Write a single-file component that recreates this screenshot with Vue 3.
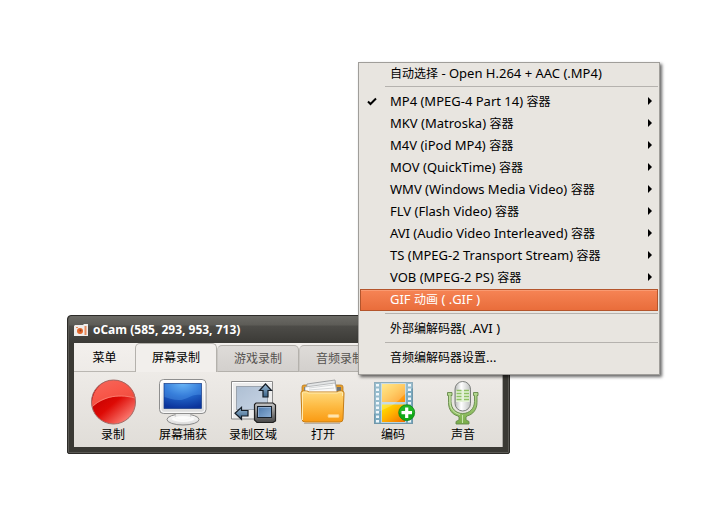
<script setup>
import { ref } from 'vue';

const tabs = ['菜单', '屏幕录制', '游戏录制', '音频录制'];
const activeTab = ref('屏幕录制');

const tools = [
  { id: 'record', label: '录制' },
  { id: 'capture', label: '屏幕捕获' },
  { id: 'region', label: '录制区域' },
  { id: 'open', label: '打开' },
  { id: 'codec', label: '编码' },
  { id: 'sound', label: '声音' },
];

const groups = [
  [{ label: '自动选择 - Open H.264 + AAC (.MP4)' }],
  [
    { label: 'MP4 (MPEG-4 Part 14) 容器', sub: true, checked: true },
    { label: 'MKV (Matroska) 容器', sub: true },
    { label: 'M4V (iPod MP4) 容器', sub: true },
    { label: 'MOV (QuickTime) 容器', sub: true },
    { label: 'WMV (Windows Media Video) 容器', sub: true },
    { label: 'FLV (Flash Video) 容器', sub: true },
    { label: 'AVI (Audio Video Interleaved) 容器', sub: true },
    { label: 'TS (MPEG-2 Transport Stream) 容器', sub: true },
    { label: 'VOB (MPEG-2 PS) 容器', sub: true },
    { label: 'GIF 动画 ( .GIF )', selected: true },
  ],
  [{ label: '外部编解码器( .AVI )' }],
  [{ label: '音频编解码器设置...' }],
];

// Latin and Chinese runs are set at different sizes
function runs(label) {
  return label.match(/[\u4e00-\u9fff]+|[^\u4e00-\u9fff]+/g).map((text) => ({
    text,
    han: /[\u4e00-\u9fff]/.test(text),
  }));
}
</script>

<template>
  <main class="desktop">
    <section class="window">
      <header class="titlebar">
        <svg class="app-icon" viewBox="0 0 14 14" aria-hidden="true">
          <path d="M0 3l1-1h8l1-1h4v12H0z" fill="#efedeb" />
          <circle cx="6" cy="8" r="3" fill="#e2672c" />
          <circle cx="6.500" cy="7.500" r="1" fill="#8d3c1c" />
          <path d="M10.500 3h2v9h-2z" fill="#e98b5c" />
          <path d="M2 4h2v1H2z" fill="#e98b5c" />
        </svg>
        <h1 class="title">oCam (585, 293, 953, 713)</h1>
      </header>

      <div class="client">
        <nav class="tabs">
          <button
            v-for="(tab, i) in tabs"
            :key="tab"
            type="button"
            class="tab"
            :class="{ plain: i === 0, active: tab === activeTab }"
            @click="activeTab = tab"
          >{{ tab }}</button>
        </nav>

        <div class="toolbar">
          <button v-for="tool in tools" :key="tool.id" type="button" class="tool">
            <svg v-if="tool.id === 'record'" class="tool-icon" viewBox="0 0 48 48" aria-hidden="true">
              <defs>
                <linearGradient id="recBase" x1="0.2" y1="0.3" x2="0.8" y2="1">
                  <stop offset="0" stop-color="#c40000" />
                  <stop offset="0.4" stop-color="#dd0a05" />
                  <stop offset="1" stop-color="#ff8a80" />
                </linearGradient>
                <linearGradient id="recShine" x1="0" y1="0" x2="0.6" y2="1">
                  <stop offset="0" stop-color="#f4685c" />
                  <stop offset="0.5" stop-color="#f8584a" />
                  <stop offset="1" stop-color="#ee4a3c" />
                </linearGradient>
              </defs>
              <circle cx="24.5" cy="24" r="22" fill="url(#recBase)" />
              <path d="M3 29C2 14 12 2 24.500 2 36 2 45 10 46.500 20 27 15 12 21 3 29z" fill="url(#recShine)" />
              <path d="M3 29C12 20 27 15 46 20" fill="none" stroke="#ff9a8c" stroke-width="0.6" />
              <circle cx="24.5" cy="24" r="22" fill="none" stroke="#a16b66" />
            </svg>

            <svg v-else-if="tool.id === 'capture'" class="tool-icon" viewBox="0 0 48 48" aria-hidden="true">
              <defs>
                <radialGradient id="capScreen" cx="0.5" cy="0" r="1">
                  <stop offset="0" stop-color="#66b4f4" />
                  <stop offset="0.5" stop-color="#2368cc" />
                  <stop offset="1" stop-color="#0b349c" />
                </radialGradient>
                <linearGradient id="capBody" x1="0" y1="0" x2="0" y2="1">
                  <stop offset="0" stop-color="#fff" />
                  <stop offset="1" stop-color="#d9d9d9" />
                </linearGradient>
              </defs>
              <ellipse cx="24" cy="41.500" rx="16" ry="5.500" fill="url(#capBody)" stroke="#888" />
              <path d="M17 34h14l1 6c-4 3-12 3-16 0z" fill="#e8e8e8" stroke="#bbb" stroke-width="0.6" />
              <ellipse cx="24" cy="41" rx="11" ry="3" fill="#fff" opacity="0.8" />
              <rect x="0.500" y="1.500" width="46.500" height="34" rx="4" fill="url(#capBody)" stroke="#8e8e8e" />
              <rect x="1.800" y="2.800" width="44" height="31.500" rx="3" fill="none" stroke="#fff" />
              <rect x="5" y="5.500" width="37.500" height="25" fill="url(#capScreen)" stroke="#173d86" stroke-width="0.7" />
              <path d="M5.500 6H42v11c-9-2-14 5-22 5-6 0-10-2-14.500-3z" fill="#6db6ff" opacity="0.28" />
            </svg>

            <svg v-else-if="tool.id === 'region'" class="tool-icon" viewBox="0 0 48 48" aria-hidden="true">
              <defs>
                <linearGradient id="regScreen" x1="0" y1="0" x2="1" y2="1">
                  <stop offset="0" stop-color="#aebfd3" />
                  <stop offset="1" stop-color="#c7d4e4" />
                </linearGradient>
                <linearGradient id="regArrow" x1="0" y1="0" x2="0" y2="1">
                  <stop offset="0" stop-color="#9bbbd6" />
                  <stop offset="1" stop-color="#386186" />
                </linearGradient>
                <linearGradient id="regDark" x1="0" y1="0" x2="0" y2="1">
                  <stop offset="0" stop-color="#c8c8c8" />
                  <stop offset="0.5" stop-color="#868686" />
                  <stop offset="1" stop-color="#444" />
                </linearGradient>
                <linearGradient id="regMini" x1="0" y1="0" x2="1" y2="1">
                  <stop offset="0" stop-color="#4b77a9" />
                  <stop offset="1" stop-color="#8eb1d7" />
                </linearGradient>
              </defs>
              <path d="M2.500 3.500h41v33l-4 4.500h-37z" fill="#ececec" stroke="#8a8a8a" />
              <path d="M3.500 40V4.500H43" fill="none" stroke="#fff" />
              <rect x="7.500" y="8.500" width="31" height="23" fill="url(#regScreen)" stroke="#9aa3ae" />
              <path d="M36.500 6l6 6.500h-3.500V19h-5v-6.500h-3.500z" fill="url(#regArrow)" stroke="#151d26" stroke-width="1.200" />
              <path d="M6 35.300l6.500-6v3.200H19v5.500h-6.500v3.300z" fill="url(#regArrow)" stroke="#151d26" stroke-width="1.200" />
              <path d="M27 25h17l2.500 2v16L44 44.500H28L25.500 42V26.500z" fill="url(#regDark)" stroke="#202020" stroke-width="1.200" />
              <rect x="28.500" y="28.500" width="14" height="11" fill="url(#regMini)" stroke="#17202b" />
              <path d="M29.500 39v-9.500H42" fill="none" stroke="#a3bddc" stroke-width="0.700" />
            </svg>

            <svg v-else-if="tool.id === 'open'" class="tool-icon" viewBox="0 0 48 48" aria-hidden="true">
              <defs>
                <linearGradient id="folderFront" x1="0" y1="0" x2="0" y2="1">
                  <stop offset="0" stop-color="#ffda7c" />
                  <stop offset="0.5" stop-color="#fdba42" />
                  <stop offset="1" stop-color="#fa9a12" />
                </linearGradient>
              </defs>
              <path d="M3 16V9q0-2 2-2h37q2 0 2 2v7z" fill="#e8a02c" stroke="#b67a22" stroke-width="0.800" />
              <path d="M5 15V9h4v6zM38 15V9h4v6z" fill="#6e7276" />
              <path d="M8 6l28-4 2 13H7z" fill="#e4e6e7" stroke="#8f9294" stroke-width="0.800" />
              <path d="M6 9l30-4 2 10H6z" fill="#fafafa" stroke="#a0a3a5" stroke-width="0.700" />
              <path d="M10 10l24-3M10 12l25-2" stroke="#c6cacc" stroke-width="0.700" />
              <path d="M2 15q0-2 2-2h3q2 0 3 1h28q1-1 3-1h2q2 0 2 2l-1 26q0 3-3 3H6q-3 0-3-3z" fill="url(#folderFront)" stroke="#c57d16" />
              <path d="M3.500 42V15q0-1 1-1h3q1 1 2 1h29q1-1 2-1h2q1 0 1 1v3" fill="none" stroke="#ffe9ae" />
              <rect x="29" y="36.500" width="11" height="3" rx="1" fill="#ffe4ae" stroke="#ffcb72" stroke-width="0.800" />
              <path d="M5 45.500h36" stroke="#8b8173" opacity="0.5" />
            </svg>

            <svg v-else-if="tool.id === 'codec'" class="tool-icon" viewBox="0 0 48 48" aria-hidden="true">
              <defs>
                <linearGradient id="filmTop" x1="0" y1="0" x2="1" y2="1">
                  <stop offset="0" stop-color="#ffe36a" />
                  <stop offset="0.5" stop-color="#ffbd3a" />
                  <stop offset="1" stop-color="#ff8a00" />
                </linearGradient>
                <linearGradient id="filmBottom" x1="0" y1="0" x2="1" y2="1">
                  <stop offset="0" stop-color="#ffea00" />
                  <stop offset="0.5" stop-color="#ffae00" />
                  <stop offset="1" stop-color="#f36c00" />
                </linearGradient>
              </defs>
              <rect x="5" y="4" width="39" height="42" fill="#79a9bf" />
              <path d="M8.500 6v39M40.500 6v39" stroke="#eef6fa" stroke-width="3" stroke-dasharray="2.500 2" />
              <rect x="5.500" y="4.500" width="38" height="41" fill="none" stroke="#7097aa" />
              <path d="M12 5h25v40H12z" fill="#b9d3df" />
              <rect x="13" y="6" width="23" height="18" fill="url(#filmTop)" />
              <rect x="13" y="26.500" width="23" height="17.500" fill="url(#filmBottom)" />
              <path d="M5 4h39v6C34 16 30 24 22 28L5 36z" fill="#fff" opacity="0.220" />
              <circle cx="37.700" cy="34.700" r="8" fill="#10a818" stroke="#078010" stroke-width="0.700" />
              <path d="M30 35a7.700 7.700 0 0 1 15.400 0z" fill="#3fc83b" opacity="0.400" />
              <path d="M37.700 29.500v10.500M32.500 34.700H43" stroke="#fff" stroke-width="3.200" />
            </svg>

            <svg v-else class="tool-icon" viewBox="0 0 48 48" aria-hidden="true">
              <defs>
                <linearGradient id="micHead" x1="0" y1="0" x2="1" y2="0">
                  <stop offset="0" stop-color="#b5b8b6" />
                  <stop offset="0.4" stop-color="#fff" />
                  <stop offset="1" stop-color="#bfc2c0" />
                </linearGradient>
                <linearGradient id="micStand" x1="0" y1="0" x2="0" y2="1">
                  <stop offset="0" stop-color="#b5d990" />
                  <stop offset="1" stop-color="#79ad48" />
                </linearGradient>
              </defs>
              <path
                d="M8.500 14.500h4.500v3h-1v6c0 7 5 12 11.700 12s11.800-5 11.800-12v-6h-1v-3H39v3h-1v7c0 7-4 12-10 13.500l-1 1V42l3 1.500V46H17v-2.500l3-1.500v-3l-1-1c-6-1.500-9.500-6.500-9.500-13.500v-7h-1z"
                fill="url(#micStand)" stroke="#65894a" stroke-width="0.900"
              />
              <path d="M11 18v6c0 7 4 11 10 12.500M23.500 37v8" fill="none" stroke="#d2eab8" stroke-width="0.900" />
              <rect x="16" y="3.500" width="15.500" height="29.500" rx="7.700" fill="url(#micHead)" stroke="#7b7e7b" />
              <path d="M17 12h13.500v12H17z" fill="#e5f2d8" />
              <path d="M17.500 12.500h5M17.500 15.500h5M17.500 18.500h5M17.500 21.500h5M25 12.500h5M25 15.500h5M25 18.500h5M25 21.500h5" stroke="#8fc164" stroke-width="1.500" />
            </svg>
            <span class="tool-label">{{ tool.label }}</span>
          </button>
        </div>
      </div>
    </section>

    <div class="menu" role="menu">
      <div v-for="(group, g) in groups" :key="g" class="menu-group" role="group">
        <button
          v-for="item in group"
          :key="item.label"
          type="button"
          role="menuitem"
          class="menu-item"
          :class="{ selected: item.selected }"
        >
          <span class="menu-check">
            <svg v-if="item.checked" class="check" viewBox="0 0 10 9" aria-hidden="true">
              <path d="M1 4.500l2.500 2.500L9 1.500" fill="none" stroke="#000" stroke-width="2" />
            </svg>
          </span>
          <span class="menu-label"><span
            v-for="(run, r) in runs(item.label)"
            :key="r"
            :class="{ han: run.han }"
          >{{ run.text }}</span></span>
          <svg v-if="item.sub" class="arrow" viewBox="0 0 4 8" aria-hidden="true">
            <path d="M0 0l4 4-4 4z" fill="#000" />
          </svg>
        </button>
      </div>
    </div>
  </main>
</template>

<style>
body {
  margin: 0;
  background: #fff;
}
</style>

<style scoped>
.desktop {
  position: relative;
  min-height: 100vh;
  font-family: 'Noto Sans', 'Noto Sans CJK SC', sans-serif;
  font-size: 12px;
  color: #000;
}

button {
  margin: 0;
  padding: 0;
  border: 0;
  background: none;
  font: inherit;
  color: inherit;
}

/* main window */
.window {
  position: absolute;
  left: 67px;
  top: 315px;
  box-sizing: border-box;
  padding: 0 6px 6px;
  border: 1px solid #2c2b28;
  border-radius: 4px 4px 2px 2px;
  background: #3a3934;
  box-shadow: inset 0 0 0 1px #5a5954;
}

.titlebar {
  display: flex;
  align-items: center;
  gap: 5px;
  height: 27px;
  margin: 0 -5px;
  padding: 0 5px;
  border-radius: 3px 3px 0 0;
  background: linear-gradient(#6b6a65 0, #5d5c57 9px, #4d4c48 10px, #3b3a36 100%);
}

.app-icon {
  width: 14px;
  height: 14px;
}

.title {
  margin: 0;
  font-family: 'Open Sans', 'Noto Sans', sans-serif;
  font-size: 12px;
  line-height: 16px;
  font-weight: 700;
  color: #fff;
}

.client {
  border-right: 1px solid #a8a6a2;
  background: linear-gradient(#f3f0ed, #e0ddd8);
}

.tabs {
  display: flex;
  align-items: flex-end;
  height: 29px;
  box-shadow: inset 0 -1px #bab7b2;
}

.tab {
  box-sizing: border-box;
  width: 82px;
  height: 27px;
  padding-bottom: 2px;
  border: 1px solid #b4b1ac;
  border-left-color: #c9c6c2;
  border-radius: 5px 5px 0 0;
  background: linear-gradient(#dedbd8, #d3d0cd);
  color: #55524f;
}

.tab.plain {
  width: 61px;
  height: 28px;
  border: 0;
  background: none;
  color: #000;
}

.tab.active {
  height: 29px;
  border-color: #b4b1ac;
  border-bottom: 0;
  background: #f2efec;
  color: #000;
}

.toolbar {
  display: flex;
  padding: 6px 4px 4px;
}

.tool {
  display: flex;
  flex-direction: column;
  align-items: center;
  gap: 1px;
  width: 70px;
}

.tool-icon {
  width: 48px;
  height: 48px;
}

.tool-label {
  line-height: 16px;
}

/* popup menu */
.menu {
  position: absolute;
  left: 358px;
  top: 62px;
  box-sizing: border-box;
  width: 302px;
  padding: 0 1px 5px;
  border: 1px solid #a09e9a;
  background: #e8e5e0;
  box-shadow: 2px 2px 3px rgba(0, 0, 0, 0.6);
}

.menu-group + .menu-group::before {
  content: '';
  display: block;
  height: 1px;
  margin: 2px 0 4px 25px;
  background: #b5b2ae;
}

.menu-item {
  display: flex;
  align-items: center;
  box-sizing: border-box;
  width: 100%;
  height: 22px;
  padding: 0 5px 2px 0;
  border: 1px solid transparent;
  text-align: left;
}

.menu-group:first-child .menu-item {
  height: 21px;
  padding-bottom: 0;
}

.menu-item.selected {
  border-color: #b4552c;
  background: linear-gradient(#f68455, #e96d3b);
  box-shadow: inset 0 1px #f99a71;
  color: #fff;
}

.menu-check {
  width: 29px;
}

.check {
  display: block;
  width: 10px;
  height: 9px;
  margin-left: 6px;
}

.menu-label {
  flex: 1;
  font-size: 13px;
  line-height: 18px;
  white-space: nowrap;
}

.han {
  font-size: 12px;
}

.arrow {
  width: 4px;
  height: 8px;
}
</style>
